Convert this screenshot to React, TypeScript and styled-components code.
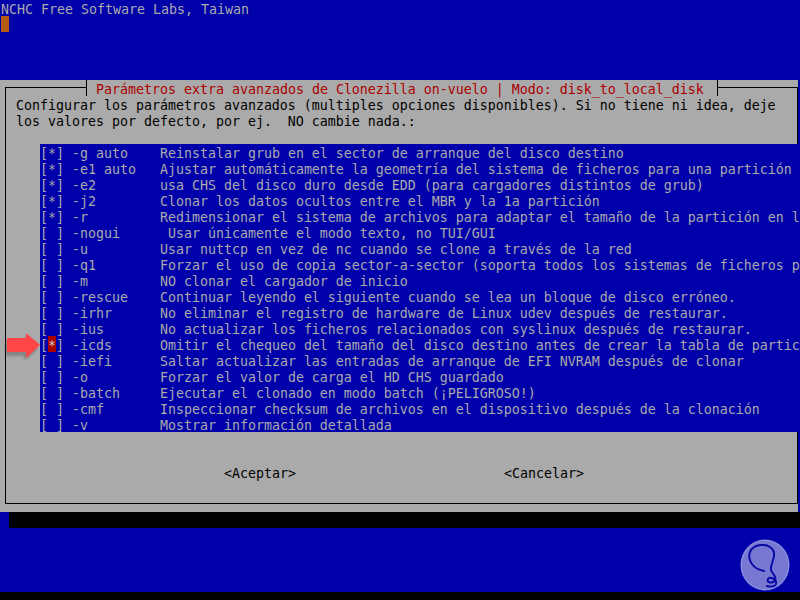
import React from 'react'
import styled, { createGlobalStyle } from 'styled-components'

const GlobalStyle = createGlobalStyle`
  html, body {
    margin: 0;
    padding: 0;
    background: #000;
    overflow: hidden;
  }
`

const Screen = styled.div`
  width: 800px;
  height: 600px;
  background: #000;
  overflow: hidden;
  font-family: 'DejaVu Sans Mono', 'Liberation Mono', monospace;
  font-size: 13.29px;
  line-height: 16px;
`

const Desktop = styled.div`
  width: 800px;
  height: 592px;
  background: #0000aa;
  color: #aaaaaa;
  display: flex;
  flex-direction: column;
`

// text cells sit 2px lower in the console font than in DejaVu
const ConsoleLine = styled.div`
  box-sizing: border-box;
  height: 16px;
  padding: 2px 0 0 1px;
  white-space: pre;
`

const Cursor = styled.div`
  width: 8px;
  height: 16px;
  margin-left: 1px;
  background: #b45a14;
`

const Dialog = styled.div`
  margin-top: 48px;
  width: 798px;
  box-sizing: border-box;
  padding: 7px 0 8px 5px;
  background: #aaaaaa;
  color: #000;
`

const Frame = styled.div`
  position: relative;
  box-sizing: border-box;
  height: 417px;
  border: 1px solid #000;
  padding-top: 8px;
  display: flex;
  flex-direction: column;
`

const Legend = styled.div`
  position: absolute;
  top: -8px;
  left: 80px;
  box-sizing: border-box;
  height: 16px;
  padding: 2px 13px 0 9px;
  border-left: 1px solid #000;
  border-right: 1px solid #000;
  background: #aaaaaa;
  color: #aa0000;
  white-space: pre;
`

const Prompt = styled.div`
  box-sizing: border-box;
  padding: 2px 0 0 10px;
  white-space: pre;
  height: 32px;
`

const List = styled.div`
  margin: 16px 0 0 34px;
  width: 770px;
  background: #0000aa;
  color: #aaaaaa;
`

const Row = styled.div`
  position: relative;
  box-sizing: border-box;
  height: 16px;
  padding-top: 2px;
  white-space: pre;
`

const Mark = styled.span<{ $active?: boolean }>`
  display: inline-block;
  box-sizing: border-box;
  width: 8px;
  height: 16px;
  padding-top: 2px;
  vertical-align: top;
  position: relative;
  top: -2px;
  background: ${(p) => (p.$active ? '#aa0000' : 'transparent')};
  color: ${(p) => (p.$active ? '#cccccc' : 'inherit')};
`

const Pointer = styled.svg`
  position: absolute;
  left: -36px;
  top: -4px;
`

const Buttons = styled.div`
  margin-top: 32px;
  box-sizing: border-box;
  padding: 2px 0 0 218px;
  display: flex;
  gap: 208px;
  white-space: pre;
  height: 16px;
`

const Shadow = styled.div`
  margin-left: 9px;
  height: 16px;
  background: #000;
`

const Footer = styled.div`
  flex: 1;
  display: flex;
  justify-content: flex-end;
  align-items: flex-end;
  padding: 0 10px 1px 0;
`

interface Option {
  flag: string
  text: string
  on: boolean
}

const options: Option[] = [
  { flag: '-g auto', text: 'Reinstalar grub en el sector de arranque del disco destino', on: true },
  { flag: '-e1 auto', text: 'Ajustar automáticamente la geometría del sistema de ficheros para una partición', on: true },
  { flag: '-e2', text: 'usa CHS del disco duro desde EDD (para cargadores distintos de grub)', on: true },
  { flag: '-j2', text: 'Clonar los datos ocultos entre el MBR y la 1a partición', on: true },
  { flag: '-r', text: 'Redimensionar el sistema de archivos para adaptar el tamaño de la partición en l', on: true },
  { flag: '-nogui', text: ' Usar únicamente el modo texto, no TUI/GUI', on: false },
  { flag: '-u', text: 'Usar nuttcp en vez de nc cuando se clone a través de la red', on: false },
  { flag: '-q1', text: 'Forzar el uso de copia sector-a-sector (soporta todos los sistemas de ficheros p', on: false },
  { flag: '-m', text: 'NO clonar el cargador de inicio', on: false },
  { flag: '-rescue', text: 'Continuar leyendo el siguiente cuando se lea un bloque de disco erróneo.', on: false },
  { flag: '-irhr', text: 'No eliminar el registro de hardware de Linux udev después de restaurar.', on: false },
  { flag: '-ius', text: 'No actualizar los ficheros relacionados con syslinux después de restaurar.', on: false },
  { flag: '-icds', text: 'Omitir el chequeo del tamaño del disco destino antes de crear la tabla de partic', on: true },
  { flag: '-iefi', text: 'Saltar actualizar las entradas de arranque de EFI NVRAM después de clonar', on: false },
  { flag: '-o', text: 'Forzar el valor de carga el HD CHS guardado', on: false },
  { flag: '-batch', text: 'Ejecutar el clonado en modo batch (¡PELIGROSO!)', on: false },
  { flag: '-cmf', text: 'Inspeccionar checksum de archivos en el dispositivo después de la clonación', on: false },
  { flag: '-v', text: 'Mostrar información detallada', on: false },
]

const SELECTED = '-icds'

const Arrow = () => (
  <Pointer width="40" height="30" viewBox="0 0 40 30">
    <defs>
      <filter id="arrowBlur" x="-20%" y="-20%" width="140%" height="140%">
        <feGaussianBlur stdDeviation="1" />
      </filter>
    </defs>
    <polygon points="1,9 20,9 20,4 34,17 20,29 20,24 1,24" fill="#444" opacity="0.35" filter="url(#arrowBlur)" />
    <polygon points="3,6 22,6 22,1 36,13 22,26 22,20 3,20" fill="#ff4646" />
  </Pointer>
)

const Logo = () => (
  <svg width="50" height="52" viewBox="0 0 50 52">
    <ellipse cx="25" cy="26" rx="24.5" ry="25.5" fill="#8a8ade" />
    <ellipse cx="25" cy="26" rx="23" ry="24" fill="#7878d2" />
    <path
      d="M24 32 C13 30 7 21 10 13 C13 5 28 3 33 11 C37 18 30 24 31 31 C32 35 37 37 35 41 C33 45 26 44 28 40 C30 37 37 40 36 45 C35 48 30 48 27 47"
      fill="none"
      stroke="#0a0aa6"
      strokeWidth="2"
      strokeLinecap="round"
    />
  </svg>
)

export default function App() {
  return (
    <Screen>
      <GlobalStyle />
      <Desktop>
        <ConsoleLine>NCHC Free Software Labs, Taiwan</ConsoleLine>
        <Cursor />
        <Dialog>
          <Frame>
            <Legend>Parámetros extra avanzados de Clonezilla on-vuelo | Modo: disk_to_local_disk</Legend>
            <Prompt>
              {'Configurar los parámetros avanzados (multiples opciones disponibles). Si no tiene ni idea, deje\nlos valores por defecto, por ej.  NO cambie nada.:'}
            </Prompt>
            <List>
              {options.map((o) => {
                const active = o.flag === SELECTED
                return (
                  <Row key={o.flag}>
                    {active && <Arrow />}
                    {'['}
                    <Mark $active={active}>{o.on ? '*' : ' '}</Mark>
                    {'] ' + o.flag.padEnd(11) + o.text}
                  </Row>
                )
              })}
            </List>
            <Buttons>
              <span>{'<Aceptar>'}</span>
              <span>{'<Cancelar>'}</span>
            </Buttons>
          </Frame>
        </Dialog>
        <Shadow />
        <Footer>
          <Logo />
        </Footer>
      </Desktop>
    </Screen>
  )
}
